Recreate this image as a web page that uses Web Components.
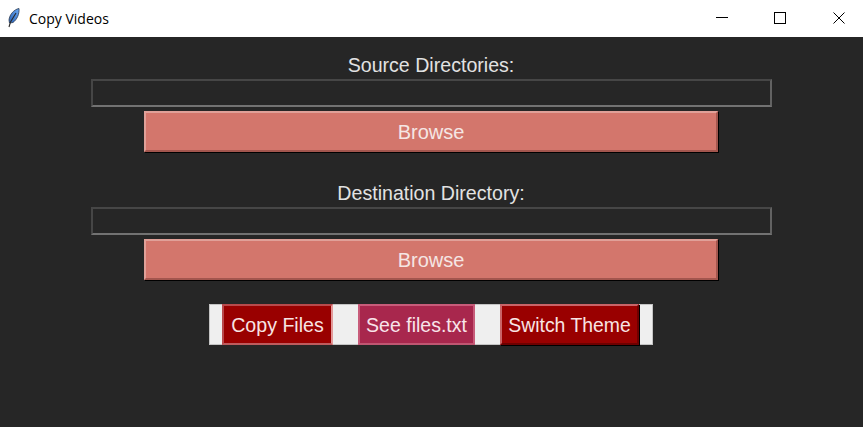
<!DOCTYPE html>
<html>
<head>
<meta charset="utf-8">
<title>Copy Videos</title>
<style>
  html, body { margin: 0; height: 100%; background: #262626; }
  body { font-family: "Liberation Sans", Arial, sans-serif; overflow: hidden; }
</style>
</head>
<body>
<copy-window>
  <source-picker label="Source Directories:"></source-picker>
  <source-picker label="Destination Directory:"></source-picker>
  <action-row>
    <tk-button kind="copy" style="width:111px;font-size:19.6px">Copy Files</tk-button>
    <tk-button kind="rose" style="width:117px;font-size:19.5px">See files.txt</tk-button>
    <tk-button kind="dark" style="width:139px;font-size:19.4px">Switch Theme</tk-button>
  </action-row>
</copy-window>

<script>
class TitleBar extends HTMLElement {
  constructor() {
    super();
    this.shadowDOM = this.attachShadow({ mode: 'open' });
  }

  connectedCallback() {
    this.shadowDOM.innerHTML = `
      <style>
        :host {
          display: flex;
          align-items: center;
          box-sizing: border-box;
          height: 37px;
          padding: 0 18px 1px 7px;
          background: #fff;
          color: #000;
        }
        .feather { width: 15px; height: 20px; flex: none; }
        .title { margin-left: 7px; flex: 1; font: 14px "Open Sans", "Liberation Sans", sans-serif; }
        .gap-a { margin-left: 46px; }
        .gap-b { margin-left: 47px; }
        svg { display: block; }
      </style>
      <svg class="feather" viewBox="0 0 15 20">
        <defs>
          <linearGradient id="blue" x1="0" y1="1" x2="1" y2="0">
            <stop offset="0" stop-color="#2a62b8"/>
            <stop offset="1" stop-color="#6aa8f2"/>
          </linearGradient>
        </defs>
        <path d="M12 .5 C7 1.500 2.500 6.500 2 12 L2.500 15 L6 14.500 C10 11.500 12.500 6 12 .5Z" fill="url(#blue)" stroke="#2b3a50" stroke-width=".8"/>
        <path d="M9 5 L3.500 14 L2 19" fill="none" stroke="#2a2a2a" stroke-width="1.100"/>
      </svg>
      <span class="title">Copy Videos</span>
      <svg width="12" height="12"><path d="M0 5.500H12" stroke="#000"/></svg>
      <svg class="gap-a" width="12" height="12"><rect x=".5" y=".5" width="11" height="11" fill="none" stroke="#000"/></svg>
      <svg class="gap-b" width="12" height="12"><path d="M.5 .5L11.500 11.500M11.500 .5L.5 11.500" stroke="#000" stroke-width="1"/></svg>
    `;
  }
}
customElements.define('title-bar', TitleBar);

class CopyWindow extends HTMLElement {
  constructor() {
    super();
    this.shadowDOM = this.attachShadow({ mode: 'open' });
  }

  connectedCallback() {
    this.shadowDOM.innerHTML = `
      <style>
        :host { display: block; height: 427px; background: #262626; }
        .content {
          display: flex;
          flex-direction: column;
          align-items: center;
          padding: 16px 1px 0 0;
        }
      </style>
      <title-bar></title-bar>
      <div class="content"><slot></slot></div>
    `;
  }
}
customElements.define('copy-window', CopyWindow);

class SourcePicker extends HTMLElement {
  constructor() {
    super();
    this.shadowDOM = this.attachShadow({ mode: 'open' });
  }

  connectedCallback() {
    const label = this.getAttribute('label');
    this.shadowDOM.innerHTML = `
      <style>
        :host {
          display: flex;
          flex-direction: column;
          align-items: center;
          width: 681px;
          margin-bottom: 29px;
        }
        .label {
          height: 26px;
          line-height: 24px;
          font-size: 19.6px;
          color: #e2e2e2;
        }
        .entry {
          box-sizing: border-box;
          width: 681px;
          height: 28px;
          border: 2px solid;
          border-color: #464646 #626262 #727272 #464646;
          background: #262626;
          margin-bottom: 4px;
        }
      </style>
      <div class="label">${label}</div>
      <div class="entry"></div>
      <tk-button kind="salmon" style="width:574px">Browse</tk-button>
    `;
  }
}
customElements.define('source-picker', SourcePicker);

class TkButton extends HTMLElement {
  constructor() {
    super();
    this.shadowDOM = this.attachShadow({ mode: 'open' });
  }

  connectedCallback() {
    // fill, top+left edge, bottom edge, right edge, text, outer shadow
    const colors = {
      salmon: ['#d3766c', '#e0a098', '#a3564e', '#a3564e', '#f5e6e4', '1px 1px 0 #000'],
      dark: ['#990000', '#c96468', '#6e0000', '#6e0000', '#f8e4e4', '1px 1px 0 #000'],
      copy: ['#990000', '#b84a4c', '#bd5c5e', '#e39a9a', '#f8e4e4', 'none'],
      rose: ['#a8274d', '#c85c7a', '#c05672', '#c85c7a', '#f8e4ea', 'none'],
    }[this.getAttribute('kind')];
    this.shadowDOM.innerHTML = `
      <style>
        :host {
          display: flex;
          box-sizing: border-box;
          height: 41px;
          padding-top: 2px;
          flex: none;
          background: ${colors[0]};
          color: ${colors[4]};
          font-size: 20px;
          align-items: center;
          justify-content: center;
          border-style: solid;
          border-width: 2px;
          border-color: ${colors[1]} ${colors[3]} ${colors[2]} ${colors[1]};
          box-shadow: ${colors[5]};
          white-space: nowrap;
        }
      </style>
      <slot></slot>
    `;
  }
}
customElements.define('tk-button', TkButton);

class ActionRow extends HTMLElement {
  constructor() {
    super();
    this.shadowDOM = this.attachShadow({ mode: 'open' });
  }

  connectedCallback() {
    this.shadowDOM.innerHTML = `
      <style>
        :host {
          display: flex;
          box-sizing: border-box;
          width: 444px;
          height: 41px;
          margin-top: -5px;
          padding: 0 14px 0 13px;
          justify-content: space-between;
          background: #efefef;
          box-shadow: inset 0 0 0 1px #c4c4c4;
        }
      </style>
      <slot></slot>
    `;
  }
}
customElements.define('action-row', ActionRow);
</script>
</body>
</html>
